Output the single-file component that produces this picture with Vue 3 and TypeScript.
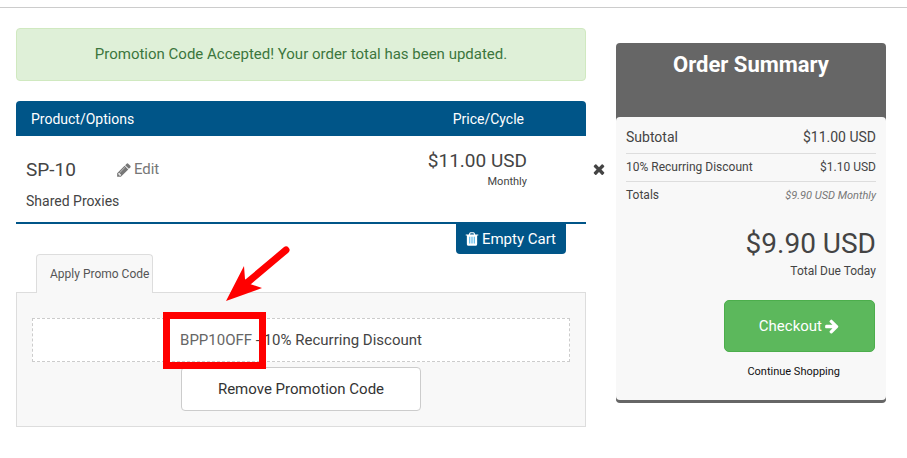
<script setup lang="ts">
interface SummaryRow {
  label: string
  value: string
  kind: 'large' | 'normal' | 'recurring'
}

const rows: SummaryRow[] = [
  { label: 'Subtotal', value: '$11.00 USD', kind: 'large' },
  { label: '10% Recurring Discount', value: '$1.10 USD', kind: 'normal' },
  { label: 'Totals', value: '$9.90 USD Monthly', kind: 'recurring' },
]
</script>

<template>
  <div class="page">
    <main class="cart">
      <div class="alert" role="status">Promotion Code Accepted! Your order total has been updated.</div>

      <div class="cart-head">
        <span>Product/Options</span>
        <span class="cycle">Price/Cycle</span>
      </div>

      <div class="cart-line">
        <div class="item">
          <div class="item-info">
            <div class="item-title">
              <span class="item-name">SP-10</span>
              <a class="edit" href="#">
                <svg class="icon" viewBox="0 0 1792 1792" aria-hidden="true">
                  <path d="M491 1536l91-91-235-235-91 91v107h128v128h107zm523-928q0-22-22-22-10 0-17 7l-542 542q-7 7-7 17 0 22 22 22 10 0 17-7l542-542q7-7 7-17zm-54-192l416 416-832 832h-416v-416zm683 96q0 53-37 90l-166 166-416-416 166-165q36-38 90-38 53 0 91 38l235 234q37 39 37 91z" />
                </svg>
                Edit
              </a>
            </div>
            <div class="item-group">Shared Proxies</div>
          </div>
          <div class="item-price">
            <span class="amount">$11.00 USD</span>
            <span class="period">Monthly</span>
          </div>
        </div>
        <button class="remove-item" type="button" aria-label="Remove">
          <svg class="icon" viewBox="0 0 1792 1792" aria-hidden="true">
            <path d="M1490 1322q0 40-28 68l-136 136q-28 28-68 28t-68-28l-294-294-294 294q-28 28-68 28t-68-28l-136-136q-28-28-28-68t28-68l294-294-294-294q-28-28-28-68t28-68l136-136q28-28 68-28t68 28l294 294 294-294q28-28 68-28t68 28l136 136q28 28 28 68t-28 68l-294 294 294 294q28 28 28 68z" />
          </svg>
        </button>
      </div>

      <div class="empty-row">
        <button class="empty" type="button">
          <svg class="icon" viewBox="0 0 1792 1792" aria-hidden="true">
            <path class="bin-inside" d="M512 600h768v850h-768z" />
            <path d="M704 1376v-704q0-14-9-23t-23-9h-64q-14 0-23 9t-9 23v704q0 14 9 23t23 9h64q14 0 23-9t9-23zm256 0v-704q0-14-9-23t-23-9h-64q-14 0-23 9t-9 23v704q0 14 9 23t23 9h64q14 0 23-9t9-23zm256 0v-704q0-14-9-23t-23-9h-64q-14 0-23 9t-9 23v704q0 14 9 23t23 9h64q14 0 23-9t9-23zm-544-992h448l-48-117q-7-9-17-11h-317q-10 2-17 11zm928 32v64q0 14-9 23t-23 9h-96v948q0 83-47 143.5t-113 60.5h-832q-66 0-113-58.5t-47-141.5v-952h-96q-14 0-23-9t-9-23v-64q0-14 9-23t23-9h309l70-167q15-37 54-63t79-26h320q40 0 79 26t54 63l70 167h309q14 0 23 9t9 23z" />
          </svg>
          Empty Cart
        </button>
      </div>

      <section class="promo">
        <a class="tab" href="#">Apply Promo Code</a>
        <div class="panel">
          <div class="promo-current">
            <span class="code">BPP10OFF
              <span class="marker" aria-hidden="true"></span>
              <svg class="arrow" viewBox="0 0 68 58" aria-hidden="true">
                <path class="shaft" d="M61 5L23 37" />
                <path d="M1 56L19 21L20 34L25 39L37 43Z" />
              </svg>
            </span> - 10% Recurring Discount
          </div>
          <button class="remove-promo" type="button">Remove Promotion Code</button>
        </div>
      </section>
    </main>

    <aside class="summary">
      <h2>Order Summary</h2>
      <div class="summary-body">
        <div v-for="row in rows" :key="row.label" class="summary-row" :class="row.kind">
          <span>{{ row.label }}</span>
          <span class="value">{{ row.value }}</span>
        </div>
        <div class="total">$9.90 USD</div>
        <div class="due">Total Due Today</div>
        <button class="checkout" type="button">
          Checkout
          <svg class="icon" viewBox="0 0 1792 1792" aria-hidden="true">
            <path d="M1600 960q0 54-37 91l-651 651q-39 37-91 37-51 0-90-37l-75-75q-38-38-38-91t38-91l293-293h-704q-52 0-84.5-37.5t-32.5-90.5v-128q0-53 32.5-90.5t84.5-37.5h704l-293-294q-38-36-38-90t38-90l75-75q38-38 90-38 53 0 91 38l651 651q37 35 37 90z" />
          </svg>
        </button>
        <a class="continue" href="#">Continue Shopping</a>
      </div>
    </aside>
  </div>
</template>

<style>
body {
  background: #fff;
}
</style>

<style scoped>
.page,
.page * {
  box-sizing: border-box;
}
.page {
  display: grid;
  grid-template-columns: minmax(0, 1fr) 270px;
  align-items: start;
  margin-top: 7px;
  border-top: 1px solid #ccc;
  padding: 20px 21px 20px 16px;
  color: #444;
  font-family: Roboto, sans-serif;
  font-size: 15px;
  line-height: 21px;
}
button {
  font: inherit;
  cursor: pointer;
}
a {
  text-decoration: none;
}
.icon {
  width: 16px;
  height: 16px;
  fill: currentColor;
  flex: none;
}
.alert,
.cart-head,
.empty-row,
.promo {
  margin-right: 30px;
}
.alert {
  padding: 15px;
  border: 1px solid #d0e9c0;
  border-radius: 4px;
  background: #dff0d8;
  color: #3c763d;
  text-align: center;
}
.cart-head {
  display: flex;
  justify-content: space-between;
  margin-top: 20px;
  padding: 8px 62px 6px 15px;
  border-radius: 4px 4px 0 0;
  background: #058;
  color: #fff;
  font-size: 14px;
}
.cart-line {
  display: flex;
}
.item {
  flex: 1;
  display: flex;
  justify-content: space-between;
  padding: 14px 59px 10px 10px;
  border-bottom: 2px solid #058;
}
.item-info {
  padding-top: 8px;
}
.item-title {
  display: flex;
  align-items: center;
  gap: 40px;
}
.item-name,
.amount {
  font-size: 19px;
}
.edit {
  display: flex;
  align-items: center;
  gap: 2px;
  padding-top: 1px;
  color: #777;
}
.item-group {
  margin-top: 11px;
  font-size: 14px;
}
.item-price {
  display: flex;
  flex-direction: column;
  text-align: right;
}
.period {
  font-size: 11px;
}
.remove-item {
  width: 30px;
  padding: 0 0 22px;
  border: 0;
  background: none;
  color: #444;
}
.remove-item .icon {
  display: block;
  margin-left: 5px;
}
.empty-row {
  display: flex;
  justify-content: flex-end;
  padding-right: 20px;
}
.empty {
  display: flex;
  align-items: center;
  gap: 2px;
  height: 30px;
  padding: 0 10px 0 8px;
  border: 0;
  border-radius: 0 0 4px 4px;
  background: #058;
  color: #fff;
}
.bin-inside {
  fill: #55b8ea;
}
.tab {
  display: block;
  width: 117px;
  height: 39px;
  margin: 0 0 -1px 20px;
  padding: 9px 0 0 13px;
  border: 1px solid #ddd;
  border-bottom: 0;
  border-radius: 4px 4px 0 0;
  background: #f8f8f8;
  color: #555;
  font-size: 12px;
  white-space: nowrap;
  position: relative;
}
.panel {
  display: flex;
  flex-direction: column;
  align-items: center;
  gap: 5px;
  padding: 25px 15px 15px;
  border: 1px solid #ddd;
  background: #f8f8f8;
}
.promo-current {
  align-self: stretch;
  padding: 11px;
  border: 1px dashed #ccc;
  background: #fff;
  text-align: center;
  line-height: 20px;
}
.code {
  position: relative;
  color: #666;
}
.marker {
  position: absolute;
  top: -19px;
  left: -17px;
  width: 103px;
  height: 57px;
  border: 7px solid #f00;
}
.arrow {
  position: absolute;
  top: -86px;
  left: 45px;
  width: 68px;
  height: 58px;
  fill: #f00;
}
.shaft {
  fill: none;
  stroke: #f00;
  stroke-width: 7;
  stroke-linecap: round;
}
.remove-promo {
  height: 44px;
  padding: 0 36px;
  border: 1px solid #ccc;
  border-radius: 4px;
  background: #fff;
  color: #333;
}
.summary {
  margin-top: 15px;
  border-bottom: 3px solid #666;
  border-radius: 4px;
  background: #666;
}
h2 {
  height: 74px;
  margin: 0;
  padding-top: 8px;
  color: #fff;
  font-size: 22px;
  font-weight: 700;
  line-height: 28px;
  text-align: center;
}
.summary-body {
  display: flex;
  flex-direction: column;
  align-items: flex-end;
  padding: 6px 10px 18px;
  border-radius: 4px;
  background: #f8f8f8;
}
.summary-row {
  align-self: stretch;
  display: flex;
  justify-content: space-between;
  align-items: center;
  height: 28px;
  border-bottom: 1px solid #ddd;
  font-size: 12px;
}
.large {
  height: 31px;
  padding-bottom: 2px;
  font-size: 14px;
}
.recurring {
  height: 26px;
  border-bottom: 0;
}
.recurring .value {
  color: #777;
  font-size: 11px;
  font-style: italic;
}
.total {
  margin-top: 19px;
  font-size: 28px;
  line-height: 34px;
}
.due {
  font-size: 12px;
}
.checkout {
  display: flex;
  align-items: center;
  gap: 2px;
  height: 52px;
  margin: 18px 1px 0 0;
  padding: 0 34px;
  border: 1px solid #4cae4c;
  border-radius: 5px;
  background: #5cb85c;
  color: #fff;
}
.continue {
  margin-top: 9px;
  padding-right: 36px;
  color: #111;
  font-size: 11px;
}
</style>
